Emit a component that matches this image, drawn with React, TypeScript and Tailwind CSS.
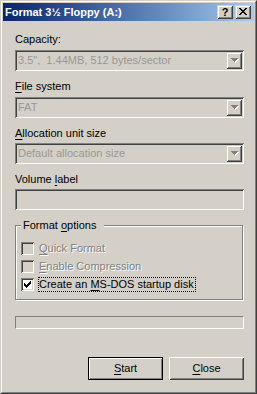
import React from "react";

const font = { fontFamily: '"Liberation Sans", Arial, sans-serif' };

function U({ children }: { children: React.ReactNode }) {
  return <span className="underline decoration-1 underline-offset-[2px]">{children}</span>;
}

function Arrow() {
  // grayed arrow with white emboss
  return (
    <svg width="8" height="5" viewBox="0 0 8 5" shapeRendering="crispEdges">
      <path d="M1 1h7v1H1zM2 2h5v1H2zM3 3h3v1H3zM4 4h1v1H4z" fill="#fff" />
      <path d="M0 0h7v1H0zM1 1h5v1H1zM2 2h3v1H2zM3 3h1v1H3z" fill="#808080" />
    </svg>
  );
}

function Combo({ value }: { value: string }) {
  return (
    <div className="flex h-[21px] w-[229px] p-[2px] shadow-[inset_1px_1px_0_#808080,inset_-1px_-1px_0_#fff,inset_2px_2px_0_#404040,inset_-2px_-2px_0_#d4d0c8]">
      <div className="flex-1 truncate whitespace-pre pl-[1px] leading-[17px] text-[#999795]">{value}</div>
      <div className="flex h-[17px] w-[16px] items-center justify-center bg-[#d4d0c8] pl-[1px] shadow-[inset_1px_1px_0_#d4d0c8,inset_-1px_-1px_0_#404040,inset_2px_2px_0_#fff,inset_-2px_-2px_0_#808080]">
        <Arrow />
      </div>
    </div>
  );
}

function Check({ checked, disabled, label, focus }: { checked?: boolean; disabled?: boolean; label: React.ReactNode; focus?: boolean }) {
  return (
    <div className="flex h-[13px] items-center">
      <div
        className={`flex h-[13px] w-[13px] shrink-0 items-start p-[3px] shadow-[inset_1px_1px_0_#808080,inset_-1px_-1px_0_#fff,inset_2px_2px_0_#404040,inset_-2px_-2px_0_#d4d0c8] ${
          disabled ? "bg-[#d4d0c8]" : "bg-white"
        }`}
      >
        {checked && (
          <svg width="7" height="7" viewBox="0 0 7 7" shapeRendering="crispEdges">
            <path d="M6 0h1v1H6zM5 1h2v1H5zM0 2h1v1H0zM4 2h3v1H4zM0 3h2v1H0zM3 3h3v1H3zM0 4h5v1H0zM1 5h3v1H1zM2 6h1v1H2z" fill="#000" />
          </svg>
        )}
      </div>
      <span
        className={`ml-[4px] border pr-[1px] leading-[13px] ${focus ? "border-dotted border-black" : "border-transparent"} ${
          disabled ? "text-[#808080] [text-shadow:1px_1px_0_#fff]" : "text-black"
        }`}
      >
        {label}
      </span>
    </div>
  );
}

export default function App() {
  return (
    <div style={font} className="h-[394px] w-[257px] text-[11px] text-black">
      <div className="h-full w-full border border-t-[#d4d0c8] border-l-[#d4d0c8] border-b-[#404040] border-r-[#404040]">
        <div className="flex h-full w-full flex-col border border-t-white border-l-white border-b-[#808080] border-r-[#808080] bg-[#d4d0c8] p-[1px]">
          {/* title bar */}
          <div className="flex h-[18px] shrink-0 items-center bg-linear-to-r from-[#0a246a] to-[#a6caf0] pl-[2px] pr-[3px]">
            <span className="flex-1 font-bold text-white">Format 3½ Floppy (A:)</span>
            <div className="flex gap-[2px]">
              <div className="flex h-[14px] w-[16px] items-center justify-center bg-[#d4d0c8] text-[11px] font-bold leading-none shadow-[inset_1px_1px_0_#d4d0c8,inset_-1px_-1px_0_#404040,inset_2px_2px_0_#fff,inset_-2px_-2px_0_#808080]">
                ?
              </div>
              <div className="flex h-[14px] w-[16px] items-center justify-center bg-[#d4d0c8] pb-[1px] shadow-[inset_1px_1px_0_#d4d0c8,inset_-1px_-1px_0_#404040,inset_2px_2px_0_#fff,inset_-2px_-2px_0_#808080]">
                <svg width="8" height="7" viewBox="0 0 8 7" shapeRendering="crispEdges">
                  <path d="M0 0h2v1H0zM6 0h2v1H6zM1 1h2v1H1zM5 1h2v1H5zM2 2h4v1H2zM3 3h2v1H3zM2 4h4v1H2zM1 5h2v1H1zM5 5h2v1H5zM0 6h2v1H0zM6 6h2v1H6z" fill="#000" />
                </svg>
              </div>
            </div>
          </div>

          {/* body */}
          <div className="flex flex-col pl-[12px] pr-[10px]">
            <div className="mt-[12px] h-[13px] leading-[13px]">Capacity:</div>
            <div className="mt-[4px]">
              <Combo value={'3.5",  1.44MB, 512 bytes/sector'} />
            </div>

            <div className="mt-[9px] h-[13px] leading-[13px]">
              <U>F</U>ile system
            </div>
            <div className="mt-[4px]">
              <Combo value="FAT" />
            </div>

            <div className="mt-[9px] h-[13px] leading-[13px]">
              <U>A</U>llocation unit size
            </div>
            <div className="mt-[3px]">
              <Combo value="Default allocation size" />
            </div>

            <div className="mt-[9px] h-[13px] leading-[13px]">
              Volume <U>l</U>abel
            </div>
            <div className="mt-[3px] h-[21px] w-[229px] shadow-[inset_1px_1px_0_#808080,inset_-1px_-1px_0_#fff,inset_2px_2px_0_#404040,inset_-2px_-2px_0_#d4d0c8]" />

            {/* group box */}
            <div className="relative mt-[15px] h-[75px] w-[228px] border border-[#808080] pl-[5px] pt-[16px] shadow-[inset_1px_1px_0_#fff,1px_1px_0_#fff]">
              <span className="absolute left-[5px] top-[-7px] w-[83px] bg-[#d4d0c8] pl-[2px] leading-[13px]">
                Format <U>o</U>ptions
              </span>
              <div className="flex flex-col gap-[5px]">
                <Check disabled label={<><U>Q</U>uick Format</>} />
                <Check disabled label={<><U>E</U>nable Compression</>} />
                <Check checked focus label={<>Create an <U>M</U>S-DOS startup disk</>} />
              </div>
            </div>

            {/* progress */}
            <div className="mt-[16px] h-[13px] w-[229px] border border-t-[#808080] border-l-[#808080] border-b-white border-r-white" />

            {/* buttons */}
            <div className="mt-[28px] flex justify-end gap-[6px]">
              <button className="h-[23px] w-[75px] border border-black bg-[#d4d0c8] leading-[21px] shadow-[inset_1px_1px_0_#fff,inset_-1px_-1px_0_#808080]">
                <U>S</U>tart
              </button>
              <button className="h-[23px] w-[75px] bg-[#d4d0c8] leading-[23px] shadow-[inset_1px_1px_0_#fff,inset_-1px_-1px_0_#404040,inset_2px_2px_0_#d4d0c8,inset_-2px_-2px_0_#808080]">
                <U>C</U>lose
              </button>
            </div>
          </div>
        </div>
      </div>
    </div>
  );
}
